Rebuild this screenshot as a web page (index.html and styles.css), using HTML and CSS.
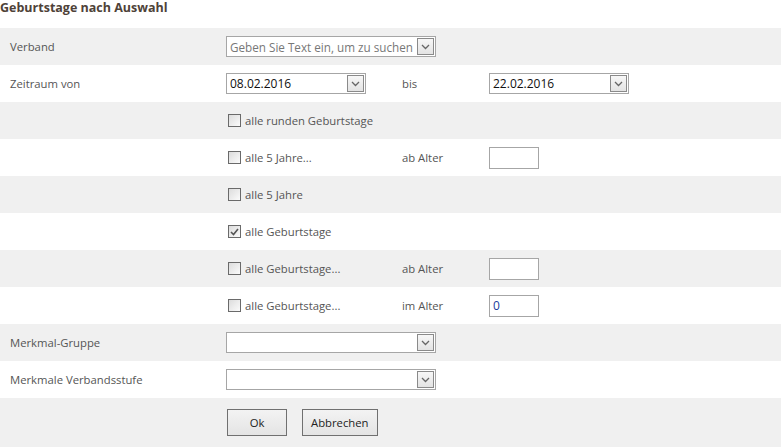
FILE: index.html
```html
<!DOCTYPE html>
<html lang="de">
<head>
    <meta charset="UTF-8">
    <title>Geburtstage nach Auswahl</title>
    <link rel="stylesheet" href="styles.css">
</head>
<body>
    <h1 class="title">Geburtstage nach Auswahl</h1>

    <div class="form">
        <div class="row gray">
            <div class="label">Verband</div>
            <div class="combo wide">
                <span class="combo-text hint">Geben Sie Text ein, um zu suchen</span>
                <span class="arrow"><svg width="9" height="6" viewBox="0 0 9 6"><path d="M1 1 L4.5 4.5 L8 1" fill="none" stroke="#666" stroke-width="1.3"/></svg></span>
            </div>
        </div>

        <div class="row">
            <div class="label">Zeitraum von</div>
            <div class="combo date">
                <span class="combo-text">08.02.2016</span>
                <span class="arrow"><svg width="9" height="6" viewBox="0 0 9 6"><path d="M1 1 L4.5 4.5 L8 1" fill="none" stroke="#666" stroke-width="1.3"/></svg></span>
            </div>
            <div class="label-mid">bis</div>
            <div class="combo date">
                <span class="combo-text">22.02.2016</span>
                <span class="arrow"><svg width="9" height="6" viewBox="0 0 9 6"><path d="M1 1 L4.5 4.5 L8 1" fill="none" stroke="#666" stroke-width="1.3"/></svg></span>
            </div>
        </div>

        <div class="row gray">
            <div class="label"></div>
            <label class="check"><span class="box"></span>alle runden Geburtstage</label>
        </div>

        <div class="row">
            <div class="label"></div>
            <label class="check"><span class="box"></span>alle 5 Jahre...</label>
            <div class="label-mid">ab Alter</div>
            <div class="textbox"></div>
        </div>

        <div class="row gray">
            <div class="label"></div>
            <label class="check"><span class="box"></span>alle 5 Jahre</label>
        </div>

        <div class="row">
            <div class="label"></div>
            <label class="check"><span class="box checked"><svg width="9" height="8" viewBox="0 0 9 8"><path d="M1 4 L3.5 6.5 L8 1" fill="none" stroke="#555" stroke-width="1.6"/></svg></span>alle Geburtstage</label>
        </div>

        <div class="row gray">
            <div class="label"></div>
            <label class="check"><span class="box"></span>alle Geburtstage...</label>
            <div class="label-mid">ab Alter</div>
            <div class="textbox"></div>
        </div>

        <div class="row">
            <div class="label"></div>
            <label class="check"><span class="box"></span>alle Geburtstage...</label>
            <div class="label-mid">im Alter</div>
            <div class="textbox value">0</div>
        </div>

        <div class="row gray">
            <div class="label">Merkmal-Gruppe</div>
            <div class="combo wide">
                <span class="combo-text"></span>
                <span class="arrow"><svg width="9" height="6" viewBox="0 0 9 6"><path d="M1 1 L4.5 4.5 L8 1" fill="none" stroke="#666" stroke-width="1.3"/></svg></span>
            </div>
        </div>

        <div class="row">
            <div class="label">Merkmale Verbandsstufe</div>
            <div class="combo wide">
                <span class="combo-text"></span>
                <span class="arrow"><svg width="9" height="6" viewBox="0 0 9 6"><path d="M1 1 L4.5 4.5 L8 1" fill="none" stroke="#666" stroke-width="1.3"/></svg></span>
            </div>
        </div>

        <div class="row gray buttons">
            <div class="label"></div>
            <div class="btns">
                <button class="btn ok">Ok</button>
                <button class="btn">Abbrechen</button>
            </div>
        </div>
    </div>
</body>
</html>
```

FILE: styles.css
```css
body {
    margin: 0;
    font-family: "Open Sans", "Noto Sans", sans-serif;
    font-size: 11.3px;
    color: #555;
    background: #fff;
}
.title {
    margin: 0;
    height: 28px;
    font-size: 12.5px;
    font-weight: bold;
    color: #4e4238;
    line-height: 15px;
}
.row {
    display: flex;
    align-items: center;
    height: 37px;
}
.row.gray {
    background: #f0f0f0;
}
.row.buttons {
    height: 49px;
}
.label {
    width: 216px;
    padding-left: 10px;
    flex-shrink: 0;
}
.label-mid {
    width: 87px;
    flex-shrink: 0;
}
.combo {
    display: flex;
    align-items: center;
    box-sizing: border-box;
    height: 21px;
    border: 1px solid #a6a6a6;
    background: #fff;
    padding: 0 1px 0 3px;
    flex-shrink: 0;
}
.combo.wide {
    width: 210px;
}
.combo.date {
    width: 140px;
    margin-right: 36px;
}
.combo-text {
    flex: 1;
    color: #111;
    font-size: 12px;
    white-space: nowrap;
    overflow: hidden;
}
.combo-text.hint {
    color: #777;
    font-size: 11.7px;
}
.arrow {
    box-sizing: border-box;
    width: 17px;
    height: 17px;
    border: 1px solid #8a8a8a;
    background: linear-gradient(#f7f7f7, #e3e3e3);
    display: flex;
    align-items: center;
    justify-content: center;
}
.check {
    display: flex;
    align-items: center;
    width: 176px;
    flex-shrink: 0;
    padding-left: 2px;
    box-sizing: border-box;
}
.box {
    box-sizing: border-box;
    width: 13px;
    height: 13px;
    border: 1px solid #6a6a6a;
    background: linear-gradient(135deg, #dcdcdc, #fbfbfb);
    margin-right: 4px;
    display: flex;
    align-items: center;
    justify-content: center;
}
.textbox {
    box-sizing: border-box;
    width: 50px;
    height: 22px;
    border: 1px solid #a6a6a6;
    background: #fff;
    padding-left: 3px;
    line-height: 20px;
    font-size: 12px;
}
.textbox.value {
    color: #1a3b9c;
}
.btns {
    display: flex;
    gap: 15px;
    padding-left: 1px;
}
.btn {
    font-family: "Open Sans", "Noto Sans", sans-serif;
    font-size: 11.3px;
    color: #222;
    height: 27px;
    border: 1px solid #707070;
    background: linear-gradient(#f3f3f3, #e4e4e4);
    padding: 0 8px;
    border-radius: 0;
}
.btn.ok {
    width: 60px;
}
```
